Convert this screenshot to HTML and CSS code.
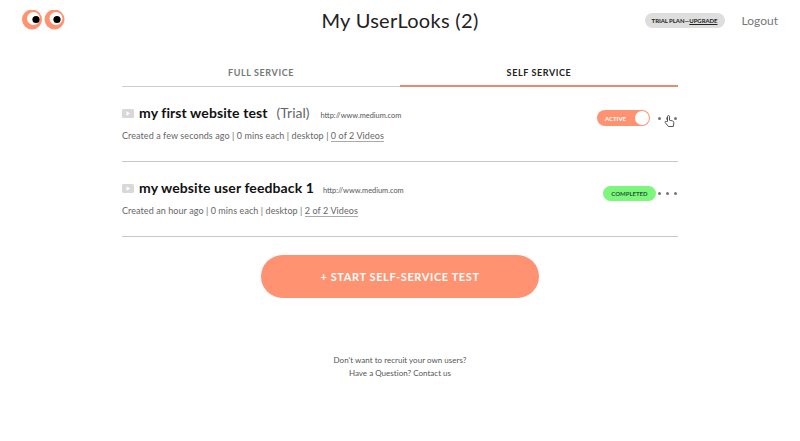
FILE: index.html
```html
<!DOCTYPE html>
<html lang="en">
<head>
    <meta charset="UTF-8">
    <meta name="viewport" content="width=device-width, initial-scale=1.0">
    <title>My UserLooks</title>
    <link rel="stylesheet" href="styles.css">
</head>
<body>

<header class="header">
    <div class="logo">
        <svg width="43" height="20" viewBox="0 0 43 20">
            <circle cx="10" cy="9.5" r="10" fill="#ff9270"/>
            <circle cx="11.5" cy="8.5" r="6.5" fill="#fff"/>
            <circle cx="14" cy="9.5" r="3.6" fill="#000"/>
            <circle cx="32.5" cy="9.5" r="10" fill="#ff9270"/>
            <circle cx="34" cy="8.5" r="6.5" fill="#fff"/>
            <circle cx="35" cy="9.5" r="3.6" fill="#000"/>
        </svg>
    </div>
    <h1>My UserLooks (2)</h1>
    <div class="account">
        <span class="plan">TRIAL PLAN—<u>UPGRADE</u></span>
        <span class="logout">Logout</span>
    </div>
</header>

<div class="container">
    <div class="tabs">
        <div class="tab">FULL SERVICE</div>
        <div class="tab active">SELF SERVICE</div>
    </div>

    <div class="test-row">
        <div class="test-info">
            <div class="test-title">
                <svg class="video-icon" width="12" height="9" viewBox="0 0 12 9">
                    <rect width="12" height="9" rx="1.5" fill="#d8d8d8"/>
                    <path d="M4.5 2.2 8 4.5 4.5 6.8z" fill="#fff"/>
                </svg>
                <span class="name">my first website test</span>
                <span class="trial">(Trial)</span>
                <span class="url">http://www.medium.com</span>
            </div>
            <p class="meta">Created a few seconds ago | 0 mins each | desktop | <span class="videos">0 of 2 Videos</span></p>
        </div>
        <div class="test-actions">
            <div class="toggle"><span>ACTIVE</span><i class="knob"></i></div>
            <div class="dots"><i></i><i></i><i></i>
                <svg class="cursor" width="11" height="13" viewBox="0 0 11 13">
                    <path d="M3.5 6.5V1.6a1 1 0 0 1 2 0v3.6l3 .7c1 .3 1.5.9 1.3 2l-.5 3.6H4.4L1.2 7.6c-.6-.9.5-1.8 1.3-1.1z" fill="#fff" stroke="#444" stroke-width=".9" stroke-linejoin="round"/>
                </svg>
            </div>
        </div>
    </div>

    <div class="test-row">
        <div class="test-info">
            <div class="test-title">
                <svg class="video-icon" width="12" height="9" viewBox="0 0 12 9">
                    <rect width="12" height="9" rx="1.5" fill="#d8d8d8"/>
                    <path d="M4.5 2.2 8 4.5 4.5 6.8z" fill="#fff"/>
                </svg>
                <span class="name">my website user feedback 1</span>
                <span class="url">http://www.medium.com</span>
            </div>
            <p class="meta">Created an hour ago | 0 mins each | desktop | <span class="videos">2 of 2 Videos</span></p>
        </div>
        <div class="test-actions">
            <div class="completed">COMPLETED</div>
            <div class="dots"><i></i><i></i><i></i></div>
        </div>
    </div>

    <button class="start-btn">+ START SELF-SERVICE TEST</button>

    <div class="footer">
        <p>Don't want to recruit your own users?</p>
        <p>Have a Question? Contact us</p>
    </div>
</div>

</body>
</html>
```

FILE: styles.css
```css
body {
    font-family: 'Lato', 'Open Sans', sans-serif;
    background-color: #ffffff;
    margin: 0;
    color: #333;
}

.header {
    display: grid;
    grid-template-columns: 1fr auto 1fr;
    align-items: center;
    height: 40px;
    padding: 0 22px;
}

.logo {
    display: flex;
}

.header h1 {
    margin: 0;
    font-size: 20px;
    font-weight: 400;
    color: #222;
    letter-spacing: 0.3px;
}

.account {
    display: flex;
    justify-content: flex-end;
    align-items: center;
    gap: 17px;
}

.plan {
    box-sizing: border-box;
    width: 80px;
    height: 15px;
    line-height: 15px;
    background: #dedede;
    border-radius: 8px;
    text-align: center;
    font-size: 6px;
    font-weight: 700;
    letter-spacing: -0.05px;
    color: #222;
    white-space: nowrap;
}

.logout {
    font-size: 12px;
    color: #777;
}

.container {
    width: 556px;
    margin: 0 auto;
}

.tabs {
    display: flex;
    margin-top: 25px;
}

.tab {
    flex: 1;
    height: 21px;
    line-height: 16px;
    text-align: center;
    font-size: 9px;
    font-weight: 700;
    letter-spacing: 0.6px;
    color: #777;
    border-bottom: 1px solid #ccc;
}

.tab.active {
    color: #222;
    border-bottom: 2px solid #e98a6b;
    height: 20px;
}

.test-row {
    display: flex;
    justify-content: space-between;
    height: 74px;
    border-bottom: 1px solid #c8c8c8;
}

.test-title {
    display: flex;
    align-items: baseline;
    margin-top: 17px;
    height: 18px;
}

.video-icon {
    margin-right: 5px;
}

.name {
    font-size: 14px;
    font-weight: 700;
    color: #111;
    letter-spacing: 0.1px;
}

.trial {
    font-size: 14px;
    color: #666;
    margin-left: 9px;
    margin-right: 2px;
}

.url {
    font-size: 7.4px;
    color: #555;
    margin-left: 9px;
}

.meta {
    margin: 8px 0 0;
    font-size: 9px;
    color: #666;
    letter-spacing: 0.08px;
}

.videos {
    border-bottom: 1px solid #aaa;
}

.test-actions {
    display: flex;
    align-items: center;
    height: 18px;
    margin-top: 22px;
}

.toggle {
    display: flex;
    align-items: center;
    justify-content: space-between;
    box-sizing: border-box;
    width: 53px;
    height: 16px;
    margin-right: 6px;
    padding: 0 1px 0 8px;
    background: #ff9270;
    border-radius: 8px;
    color: #fff;
    font-size: 6px;
    font-weight: 700;
}

.knob {
    width: 14px;
    height: 14px;
    background: #fff;
    border-radius: 50%;
}

.completed {
    width: 53px;
    height: 15px;
    line-height: 15px;
    background: #7cf77c;
    border-radius: 8px;
    text-align: center;
    font-size: 6px;
    font-weight: 700;
    color: #1d5a3a;
}

.dots {
    display: flex;
    position: relative;
    gap: 5px;
    width: 19px;
    margin-left: 2px;
    margin-right: 1px;
}

.dots i {
    width: 3px;
    height: 3px;
    background: #777;
    border-radius: 50%;
}

.cursor {
    position: absolute;
    left: 6px;
    top: -2px;
}

.start-btn {
    display: block;
    width: 278px;
    height: 43px;
    margin: 18px auto 0;
    background: #ff9270;
    border: none;
    border-radius: 22px;
    color: #fff;
    font-family: inherit;
    font-size: 11px;
    font-weight: 700;
    letter-spacing: 0.6px;
}

.footer {
    margin-top: 57px;
    text-align: center;
    font-size: 8px;
    color: #555;
    letter-spacing: 0.02px;
}

.footer p {
    margin: 0 0 3px;
    line-height: 10px;
}
```
